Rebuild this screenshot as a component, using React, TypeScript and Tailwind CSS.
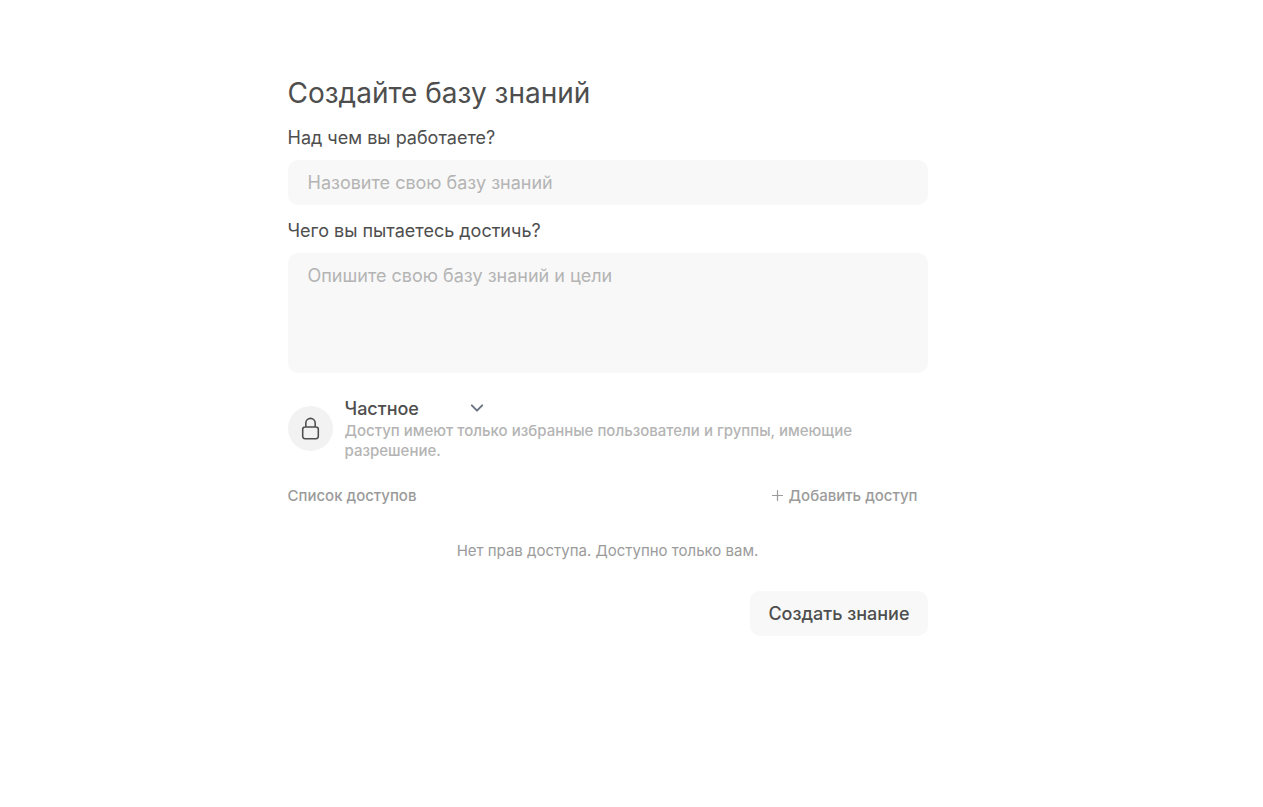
import { useState } from "react";

export default function CreateKnowledgeBase() {
  const [name, setName] = useState("");
  const [description, setDescription] = useState("");
  const [visibility, setVisibility] = useState("private");

  return (
    <div className="w-full px-4 pt-[75px] font-['Inter',sans-serif] text-[#4e4e4e]">
      <form
        className="mx-auto w-full max-w-[640px] -translate-x-6"
        onSubmit={(e) => e.preventDefault()}
      >
        <h1 className="text-[28px] leading-9">Создайте базу знаний</h1>

        <label htmlFor="name" className="mt-[13px] mb-2 block text-lg leading-7">
          Над чем вы работаете?
        </label>
        <input
          id="name"
          type="text"
          value={name}
          onChange={(e) => setName(e.target.value)}
          placeholder="Назовите свою базу знаний"
          className="block h-[45px] w-full rounded-[10px] bg-[#f8f8f8] px-5 text-lg outline-none placeholder:text-[#b4b4b4]"
        />

        <label htmlFor="description" className="mt-3 mb-2 block text-lg leading-7">
          Чего вы пытаетесь достичь?
        </label>
        <textarea
          id="description"
          rows={4}
          value={description}
          onChange={(e) => setDescription(e.target.value)}
          placeholder="Опишите свою базу знаний и цели"
          className="block h-[120px] w-full resize-none rounded-[10px] bg-[#f8f8f8] px-5 py-[9px] text-lg outline-none placeholder:text-[#b4b4b4]"
        />

        {/* Visibility */}
        <div className="mt-[23px] flex items-center gap-3">
          <div className="flex size-[45px] shrink-0 items-center justify-center rounded-full bg-[#f2f2f2]">
            <svg
              viewBox="0 0 24 24"
              fill="none"
              stroke="currentColor"
              strokeWidth="1.5"
              strokeLinecap="round"
              strokeLinejoin="round"
              className="size-[25px]"
            >
              <path d="M16.5 10.5V6.75a4.5 4.5 0 1 0-9 0v3.75m-.75 11.25h10.5a2.25 2.25 0 0 0 2.25-2.25v-6.75a2.25 2.25 0 0 0-2.25-2.25H6.75a2.25 2.25 0 0 0-2.25 2.25v6.75a2.25 2.25 0 0 0 2.25 2.25Z" />
            </svg>
          </div>
          <div className="min-w-0 flex-1">
            <div className="relative w-[145px]">
              <select
                aria-label="Видимость"
                value={visibility}
                onChange={(e) => setVisibility(e.target.value)}
                className="block h-[25px] w-full appearance-none bg-transparent text-lg leading-6 font-medium outline-none"
              >
                <option value="private">Частное</option>
                <option value="public">Публичное</option>
              </select>
              <svg
                viewBox="0 0 20 20"
                fill="none"
                stroke="#6b7280"
                strokeWidth="1.5"
                strokeLinecap="round"
                strokeLinejoin="round"
                className="pointer-events-none absolute -top-px right-0 size-[26px]"
              >
                <path d="m6 8 4 4 4-4" />
              </svg>
            </div>
            <p className="text-[15px] leading-5 font-medium text-[#b4b4b4]">
              Доступ имеют только избранные пользователи и группы, имеющие разрешение.
            </p>
          </div>
        </div>

        {/* Access list */}
        <div className="mt-[25px] flex items-center justify-between text-[15px] leading-5 font-medium text-[#9b9b9b]">
          <h2>Список доступов</h2>
          <button type="button" className="mr-2.5 flex items-center gap-1">
            <svg
              viewBox="0 0 16 16"
              fill="none"
              stroke="currentColor"
              strokeWidth="1.2"
              strokeLinecap="round"
              className="size-4"
            >
              <path d="M8.5 2.5v10M3.5 7.5h10" />
            </svg>
            Добавить доступ
          </button>
        </div>
        <p className="mt-[35px] text-center text-[15px] leading-5 text-[#9b9b9b]">
          Нет прав доступа. Доступно только вам.
        </p>

        <div className="mt-[30px] flex justify-end">
          <button
            type="submit"
            className="h-[45px] rounded-[10px] bg-[#f8f8f8] px-[18px] text-lg font-medium"
          >
            Создать знание
          </button>
        </div>
      </form>
    </div>
  );
}
